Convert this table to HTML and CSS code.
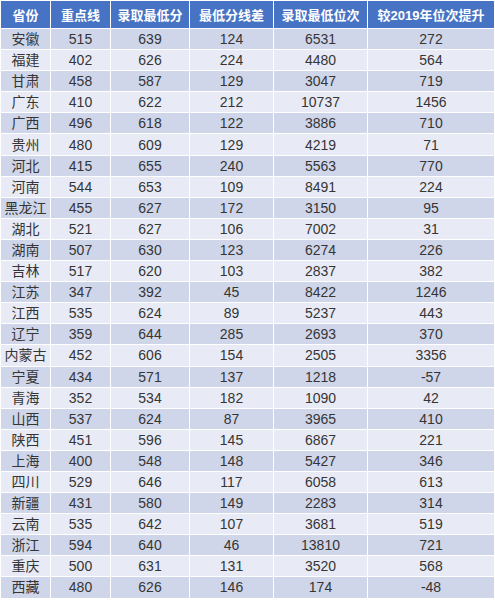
FILE: index.html
```html
<!DOCTYPE html>
<html lang="zh">
<head>
<meta charset="utf-8">
<link rel="stylesheet" href="styles.css">
</head>
<body>
<table class="score-table">
<colgroup>
<col class="c1"><col class="c2"><col class="c3"><col class="c4"><col class="c5"><col class="c6">
</colgroup>
<thead>
<tr><th>省份</th><th>重点线</th><th>录取最低分</th><th>最低分线差</th><th>录取最低位次</th><th>较2019年位次提升</th></tr>
</thead>
<tbody>
<tr><td>安徽</td><td>515</td><td>639</td><td>124</td><td>6531</td><td>272</td></tr>
<tr><td>福建</td><td>402</td><td>626</td><td>224</td><td>4480</td><td>564</td></tr>
<tr><td>甘肃</td><td>458</td><td>587</td><td>129</td><td>3047</td><td>719</td></tr>
<tr><td>广东</td><td>410</td><td>622</td><td>212</td><td>10737</td><td>1456</td></tr>
<tr><td>广西</td><td>496</td><td>618</td><td>122</td><td>3886</td><td>710</td></tr>
<tr><td>贵州</td><td>480</td><td>609</td><td>129</td><td>4219</td><td>71</td></tr>
<tr><td>河北</td><td>415</td><td>655</td><td>240</td><td>5563</td><td>770</td></tr>
<tr><td>河南</td><td>544</td><td>653</td><td>109</td><td>8491</td><td>224</td></tr>
<tr><td>黑龙江</td><td>455</td><td>627</td><td>172</td><td>3150</td><td>95</td></tr>
<tr><td>湖北</td><td>521</td><td>627</td><td>106</td><td>7002</td><td>31</td></tr>
<tr><td>湖南</td><td>507</td><td>630</td><td>123</td><td>6274</td><td>226</td></tr>
<tr><td>吉林</td><td>517</td><td>620</td><td>103</td><td>2837</td><td>382</td></tr>
<tr><td>江苏</td><td>347</td><td>392</td><td>45</td><td>8422</td><td>1246</td></tr>
<tr><td>江西</td><td>535</td><td>624</td><td>89</td><td>5237</td><td>443</td></tr>
<tr><td>辽宁</td><td>359</td><td>644</td><td>285</td><td>2693</td><td>370</td></tr>
<tr><td>内蒙古</td><td>452</td><td>606</td><td>154</td><td>2505</td><td>3356</td></tr>
<tr><td>宁夏</td><td>434</td><td>571</td><td>137</td><td>1218</td><td>-57</td></tr>
<tr><td>青海</td><td>352</td><td>534</td><td>182</td><td>1090</td><td>42</td></tr>
<tr><td>山西</td><td>537</td><td>624</td><td>87</td><td>3965</td><td>410</td></tr>
<tr><td>陕西</td><td>451</td><td>596</td><td>145</td><td>6867</td><td>221</td></tr>
<tr><td>上海</td><td>400</td><td>548</td><td>148</td><td>5427</td><td>346</td></tr>
<tr><td>四川</td><td>529</td><td>646</td><td>117</td><td>6058</td><td>613</td></tr>
<tr><td>新疆</td><td>431</td><td>580</td><td>149</td><td>2283</td><td>314</td></tr>
<tr><td>云南</td><td>535</td><td>642</td><td>107</td><td>3681</td><td>519</td></tr>
<tr><td>浙江</td><td>594</td><td>640</td><td>46</td><td>13810</td><td>721</td></tr>
<tr><td>重庆</td><td>500</td><td>631</td><td>131</td><td>3520</td><td>568</td></tr>
<tr><td>西藏</td><td>480</td><td>626</td><td>146</td><td>174</td><td>-48</td></tr>
</tbody>
</table>
</body>
</html>
```
FILE: styles.css
```css
html, body {
  margin: 0;
  padding: 0;
  background: #ffffff;
}
.score-table {
  width: 494px;
  table-layout: fixed;
  border-collapse: collapse;
  font-family: "Liberation Sans", "Noto Sans CJK SC", sans-serif;
  color: #353535;
}
.c1 { width: 50px; }
.c2 { width: 60px; }
.c3 { width: 79px; }
.c4 { width: 84px; }
.c5 { width: 94px; }
.c6 { width: 127px; }
.score-table th,
.score-table td {
  border: 1px solid #ffffff;
  padding: 0;
  text-align: center;
  white-space: nowrap;
  overflow: hidden;
}
.score-table th {
  height: 27px;
  background: #4673c4;
  color: #ffffff;
  font-size: 13px;
  font-weight: bold;
}
.score-table td {
  height: 20.1px;
  font-size: 14px;
  line-height: 20px;
}
.score-table tbody tr:nth-child(odd) td {
  background: #d0d6ea;
}
.score-table tbody tr:nth-child(even) td {
  background: #e8ebf5;
}
```
